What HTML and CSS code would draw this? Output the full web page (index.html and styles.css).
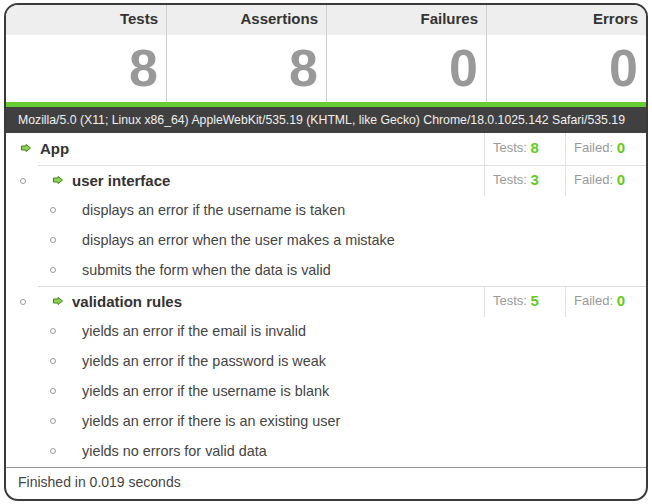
FILE: index.html
```html
<!DOCTYPE html>
<html>
<head>
<meta charset="utf-8">
<link rel="stylesheet" href="styles.css">
</head>
<body>
<div class="report">
  <div class="summary">
    <div class="stat"><div class="stat-label">Tests</div><div class="stat-value">8</div></div>
    <div class="stat"><div class="stat-label">Assertions</div><div class="stat-value">8</div></div>
    <div class="stat"><div class="stat-label">Failures</div><div class="stat-value">0</div></div>
    <div class="stat"><div class="stat-label">Errors</div><div class="stat-value">0</div></div>
  </div>
  <div class="status-bar"></div>
  <div class="agent">Mozilla/5.0 (X11; Linux x86_64) AppleWebKit/535.19 (KHTML, like Gecko) Chrome/18.0.1025.142 Safari/535.19</div>
  <div class="results">
    <div class="row top-row">
      <div class="head-main">
        <svg class="arrow" width="10" height="8" viewBox="0 0 10 8"><path d="M0.5 2H5V0.5L9.5 4L5 7.5V6H0.5Z" fill="#8fd150" stroke="#3f8a1f" stroke-width="1"/></svg>
        <span class="suite-title">App</span>
        <span class="cell">Tests:&nbsp;<b>8</b></span>
        <span class="cell">Failed:&nbsp;<b>0</b></span>
      </div>
    </div>

    <div class="row suite-row">
      <div class="bullet-col"><span class="bullet"></span></div>
      <div class="head-main bordered">
        <svg class="arrow" width="10" height="8" viewBox="0 0 10 8"><path d="M0.5 2H5V0.5L9.5 4L5 7.5V6H0.5Z" fill="#8fd150" stroke="#3f8a1f" stroke-width="1"/></svg>
        <span class="suite-title">user interface</span>
        <span class="cell">Tests:&nbsp;<b>3</b></span>
        <span class="cell">Failed:&nbsp;<b>0</b></span>
      </div>
    </div>
    <div class="spec"><span class="bullet"></span><span class="spec-text">displays an error if the username is taken</span></div>
    <div class="spec"><span class="bullet"></span><span class="spec-text">displays an error when the user makes a mistake</span></div>
    <div class="spec"><span class="bullet"></span><span class="spec-text">submits the form when the data is valid</span></div>

    <div class="row suite-row">
      <div class="bullet-col"><span class="bullet"></span></div>
      <div class="head-main bordered">
        <svg class="arrow" width="10" height="8" viewBox="0 0 10 8"><path d="M0.5 2H5V0.5L9.5 4L5 7.5V6H0.5Z" fill="#8fd150" stroke="#3f8a1f" stroke-width="1"/></svg>
        <span class="suite-title">validation rules</span>
        <span class="cell">Tests:&nbsp;<b>5</b></span>
        <span class="cell">Failed:&nbsp;<b>0</b></span>
      </div>
    </div>
    <div class="spec"><span class="bullet"></span><span class="spec-text">yields an error if the email is invalid</span></div>
    <div class="spec"><span class="bullet"></span><span class="spec-text">yields an error if the password is weak</span></div>
    <div class="spec"><span class="bullet"></span><span class="spec-text">yields an error if the username is blank</span></div>
    <div class="spec"><span class="bullet"></span><span class="spec-text">yields an error if there is an existing user</span></div>
    <div class="spec"><span class="bullet"></span><span class="spec-text">yields no errors for valid data</span></div>
  </div>
  <div class="footer">Finished in 0.019 seconds</div>
</div>
</body>
</html>
```

FILE: styles.css
```css
html, body {
  margin: 0;
  padding: 0;
  background: #ffffff;
}

body {
  font-family: "Liberation Sans", Arial, sans-serif;
  color: #333333;
}

.report {
  margin: 3px 0 0 4px;
  width: 640px;
  border: 2px solid #3a3a3a;
  border-radius: 14px;
  overflow: hidden;
  background: #ffffff;
}

.summary {
  display: grid;
  grid-template-columns: repeat(4, 1fr);
}

.stat {
  border-left: 1px solid #cfcfcf;
}

.stat:first-child {
  border-left: none;
}

.stat-label {
  height: 30px;
  line-height: 28px;
  background: #eeeeee;
  text-align: right;
  padding-right: 8px;
  font-size: 15px;
  font-weight: bold;
  color: #333333;
}

.stat-value {
  height: 67px;
  line-height: 66px;
  text-align: right;
  padding-right: 8px;
  font-size: 52px;
  font-weight: bold;
  color: #999999;
}

.status-bar {
  height: 5px;
  background: #66cc33;
}

.agent {
  height: 26px;
  line-height: 26px;
  background: #404040;
  color: #f0f0f0;
  font-size: 12.25px;
  padding-left: 12px;
  white-space: nowrap;
  overflow: hidden;
}

.row {
  display: flex;
}

.top-row {
  height: 32px;
}

.suite-row {
  height: 31px;
}

.bullet-col {
  width: 32px;
  display: flex;
  align-items: center;
}

.bullet-col .bullet {
  margin-left: 14px;
}

.bullet {
  width: 4px;
  height: 4px;
  border: 1px solid #999999;
  border-radius: 50%;
  flex: none;
}

.head-main {
  box-sizing: border-box;
  flex: 1;
  display: flex;
  align-items: center;
  padding-left: 15px;
}

.head-main .suite-title,
.head-main .arrow {
  margin-bottom: 2px;
}

.head-main.bordered {
  border-top: 1px solid #dddddd;
}

.arrow {
  flex: none;
  display: block;
}

.suite-title {
  margin-left: 9px;
  font-size: 15px;
  font-weight: bold;
  color: #333333;
  flex: 1;
}

.cell {
  box-sizing: border-box;
  width: 81px;
  align-self: stretch;
  display: flex;
  align-items: center;
  border-left: 1px solid #e2e2e2;
  padding-left: 8px;
  padding-bottom: 3px;
  font-size: 13px;
  color: #999999;
}

.cell b {
  font-size: 15px;
  color: #66cc22;
}

.spec {
  box-sizing: border-box;
  display: flex;
  align-items: center;
  height: 30px;
  padding-left: 44px;
  padding-bottom: 2px;
}

.spec-text {
  margin-left: 26px;
  font-size: 14.4px;
  color: #444444;
}

.footer {
  border-top: 1px solid #999999;
  height: 31px;
  line-height: 29px;
  padding-left: 12px;
  font-size: 14px;
  color: #444444;
}
```
